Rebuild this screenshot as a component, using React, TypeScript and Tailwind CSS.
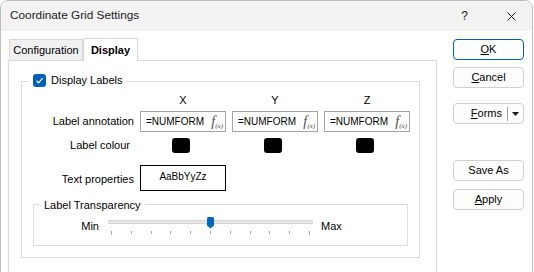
import React from "react";

function FxInput() {
  return (
    <div className="h-[21px] w-[86px] border border-[#a3a3a3] bg-white flex items-center justify-between pl-[5px] pr-[2px]">
      <span className="text-[10px] leading-none text-black">=NUMFORM</span>
      <span className="flex items-end leading-none text-[#4a4a4a]">
        <span className="font-['Liberation_Serif',serif] italic text-[14px] leading-none">f</span>
        <span className="font-['Liberation_Serif',serif] italic text-[7px] leading-none mb-[-1px]">(x)</span>
      </span>
    </div>
  );
}

function Swatch() {
  return <div className="w-[18px] h-[15px] rounded-[3px] bg-black" />;
}

function Btn({ children, primary }: { children: React.ReactNode; primary?: boolean }) {
  return (
    <div
      className={
        "h-[21px] w-[71px] rounded-[4px] border flex items-center justify-center text-[11px] text-black " +
        (primary ? "border-[#005fb8] bg-white" : "border-[#d0d0d0] bg-[#fdfdfd]")
      }
    >
      {children}
    </div>
  );
}

export default function App() {
  const ticks = Array.from({ length: 11 }, (_, i) => i);
  return (
    <div className="w-[534px] h-[272px] overflow-hidden bg-white font-['Liberation_Sans',Arial,sans-serif] text-black">
      <div className="w-[533px] h-[290px] border border-[#bdbdbd] rounded-t-[8px] overflow-hidden bg-white flex flex-col">
        {/* Title bar */}
        <div className="h-[30px] bg-[#f3f3f3] flex items-center pl-[9px] shrink-0">
          <span className="text-[11.8px] text-[#1a1a1a]">Coordinate Grid Settings</span>
          <div className="flex-1" />
          <span className="text-[12px] text-[#1a1a1a] mr-[39px]">?</span>
          <svg width="9" height="9" viewBox="0 0 9 9" className="mr-[16px]">
            <path d="M0.5 0.5 L8.5 8.5 M8.5 0.5 L0.5 8.5" stroke="#1a1a1a" strokeWidth="1" />
          </svg>
        </div>

        {/* Body */}
        <div className="flex flex-row flex-1">
          {/* Left: tabs + panel */}
          <div className="ml-[7px] pt-[7px] flex flex-col">
            <div className="flex items-end pl-[1px]">
              <div className="h-[21px] w-[74px] bg-[#f0f0f0] border border-b-0 border-[#d9d9d9] flex items-center justify-center text-[11px]">
                Configuration
              </div>
              <div className="relative z-10 -mb-px h-[23px] w-[55px] bg-white border border-b-0 border-[#d9d9d9] flex items-center justify-center text-[11px] font-bold">
                Display
              </div>
            </div>
            <div className="w-[429px] h-[240px] border border-[#d9d9d9] bg-white pt-[20px]">
              {/* Display Labels group */}
              <div className="ml-[12px] w-[399px] border border-[#dcdcdc] pb-[11px]">
                <div className="-mt-[9px] h-[14px] ml-[7px] px-[4px] w-fit bg-white flex items-center gap-[5px]">
                  <div className="w-[13px] h-[13px] rounded-[3px] bg-[#005fb8] flex items-center justify-center">
                    <svg width="9" height="9" viewBox="0 0 9 9">
                      <path d="M1.5 4.8 L3.6 6.8 L7.6 2.2" fill="none" stroke="white" strokeWidth="1.2" />
                    </svg>
                  </div>
                  <span className="text-[11px] leading-none">Display Labels</span>
                </div>

                <div className="mt-[5px] grid grid-cols-[112px_86px_86px_86px] gap-x-[6px] h-[14px] items-center text-[11px]">
                  <div />
                  <div className="text-center">X</div>
                  <div className="text-center">Y</div>
                  <div className="text-center">Z</div>
                </div>

                <div className="mt-[5px] grid grid-cols-[112px_86px_86px_86px] gap-x-[6px] items-center text-[11px]">
                  <div className="text-right">Label annotation</div>
                  <FxInput />
                  <FxInput />
                  <FxInput />
                </div>

                <div className="mt-[5px] grid grid-cols-[112px_86px_86px_86px] gap-x-[6px] h-[15px] items-center text-[11px]">
                  <div className="text-right pr-[4px]">Label colour</div>
                  <div className="flex justify-center pr-[4px]"><Swatch /></div>
                  <div className="flex justify-center pr-[4px]"><Swatch /></div>
                  <div className="flex justify-center pr-[4px]"><Swatch /></div>
                </div>

                <div className="mt-[13px] grid grid-cols-[112px_86px] gap-x-[6px] items-center text-[11px]">
                  <div className="text-right pt-[2px]">Text properties</div>
                  <div className="h-[26px] border border-black flex items-center justify-center pb-[3px]">
                    <span className="text-[10px]">AaBbYyZz</span>
                  </div>
                </div>

                {/* Label Transparency group */}
                <div className="mt-[13px] ml-[11px] w-[375px] border border-[#dcdcdc] pb-[9px]">
                  <div className="-mt-[7px] h-[14px] ml-[6px] px-[4px] w-fit bg-white flex items-center text-[11px] leading-none">
                    Label Transparency
                  </div>
                  <div className="mt-[5px] flex items-center h-[19px] text-[11px]">
                    <div className="w-[65px] text-right">Min</div>
                    <div className="ml-[9px] w-[205px] h-[19px] relative">
                      <div className="mt-[3px] h-[4px] bg-[#e6e6e6] border-y border-[#d4d4d4]" />
                      <div className="mt-[7px] flex justify-between items-start px-[3px]">
                        {ticks.map((i) => (
                          <div
                            key={i}
                            className={"w-px bg-[#a9a9a9] " + (i === 0 || i === 10 ? "h-[4px]" : "h-[3px]")}
                          />
                        ))}
                      </div>
                      <svg width="7" height="12" viewBox="0 0 7 12" className="absolute left-[99px] top-0">
                        <path d="M0 1.5 Q0 0 1.5 0 H5.5 Q7 0 7 1.5 V8.5 L3.5 11.5 L0 8.5 Z" fill="#0067c0" />
                      </svg>
                    </div>
                    <div className="ml-[8px]">Max</div>
                  </div>
                </div>
              </div>
            </div>
          </div>

          {/* Right buttons */}
          <div className="ml-[16px] pt-[8px] flex flex-col">
            <Btn primary>
              <span className="underline">O</span>K
            </Btn>
            <div className="mt-[7px]">
              <Btn>
                <span className="underline">C</span>ancel
              </Btn>
            </div>
            <div className="mt-[15px] h-[21px] w-[71px] rounded-[4px] border border-[#d0d0d0] bg-[#fdfdfd] flex items-center text-[11px]">
              <div className="flex-1 text-right pr-[5px]">
                <span className="underline">F</span>orms
              </div>
              <div className="w-px h-[14px] bg-[#a0a0a0]" />
              <div className="w-[15px] flex items-center justify-center">
                <svg width="7" height="4" viewBox="0 0 7 4">
                  <path d="M0 0 H7 L3.5 4 Z" fill="#1a1a1a" />
                </svg>
              </div>
            </div>
            <div className="mt-[36px]">
              <Btn>Save As</Btn>
            </div>
            <div className="mt-[8px]">
              <Btn>
                <span className="underline">A</span>pply
              </Btn>
            </div>
          </div>
        </div>
      </div>
    </div>
  );
}
